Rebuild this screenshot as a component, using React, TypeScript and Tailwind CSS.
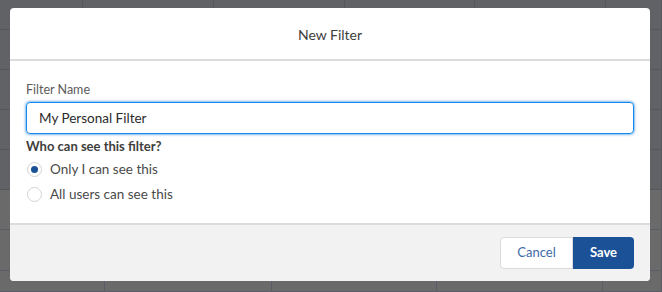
import React from "react";

const font = { fontFamily: "Lato, 'Open Sans', 'Liberation Sans', sans-serif" };

function Radio({ checked, label }: { checked?: boolean; label: string }) {
  return (
    <div className="flex items-center h-[25px]">
      <span className="w-[15px] h-[15px] ml-[1px] rounded-full border border-[#d4d4d4] bg-white flex items-center justify-center">
        {checked && <span className="w-[7px] h-[7px] rounded-full bg-[#1b5297]" />}
      </span>
      <span className="ml-[8px] text-[13.5px] text-[#4a4a4a]">{label}</span>
    </div>
  );
}

export default function App() {
  const topCols = [83, 131, 131, 130, 131, 56];
  const botCols = [105, 167, 165, 166, 59];
  return (
    <div className="relative w-[662px] h-[292px] overflow-hidden bg-[#616266]" style={font}>
      {/* background page seen through overlay */}
      <div className="flex flex-col w-full h-full">
        {[30, 40, 40, 40, 40].map((h, i) => (
          <div key={i} className="flex border-b border-[#56575c]" style={{ height: h }}>
            {topCols.map((w, j) => (
              <div key={j} className="border-r border-[#56575c] h-full" style={{ width: w }} />
            ))}
          </div>
        ))}
        <div className="flex-1 flex flex-col bg-[#6a6a6a]">
          {[40, 41, 21].map((h, i) => (
            <div key={i} className="flex border-b border-[#5c5c66]" style={{ height: h }}>
              {botCols.map((w, j) => (
                <div key={j} className="border-r border-[#5c5c66] h-full" style={{ width: w }} />
              ))}
            </div>
          ))}
        </div>
      </div>

      {/* modal */}
      <div className="absolute left-[10px] top-[8px] w-[640px] h-[273px] bg-white rounded-[4px] flex flex-col overflow-hidden">
        <div className="h-[51px] flex items-center justify-center border-b-2 border-[#dcdcdc] box-content">
          <span className="text-[14px] text-[#3e3e3c] pt-[1px]">New Filter</span>
        </div>
        <div className="flex-1 px-[16px] pt-[22px]">
          <div className="text-[12.5px] leading-[14px] text-[#5b5b5b]">Filter Name</div>
          <div className="mt-[5px] h-[32px] rounded-[4px] border border-[#1589ee] shadow-[0_0_3px_#0070d2] flex items-center pl-[12px] text-[13.5px] text-[#2b2b2b]">
            My Personal Filter
          </div>
          <div className="mt-[4px] text-[13px] font-bold text-[#3e3e3c] leading-[16px]">Who can see this filter?</div>
          <div className="mt-[3px] flex flex-col">
            <Radio checked label="Only I can see this" />
            <Radio label="All users can see this" />
          </div>
        </div>
        <div className="h-[56px] bg-[#f2f2f2] border-t-2 border-[#dcdcdc] box-content flex items-center justify-end pr-[16px]">
          <div className="flex h-[32px] -mt-[1px]">
            <button className="w-[73px] h-full bg-white border border-[#dddbda] rounded-l-[4px] text-[13px] text-[#3d6aa8]">
              Cancel
            </button>
            <button className="w-[61px] h-full bg-[#1b5297] rounded-r-[4px] text-[13px] font-bold text-white">
              Save
            </button>
          </div>
        </div>
      </div>
    </div>
  );
}
